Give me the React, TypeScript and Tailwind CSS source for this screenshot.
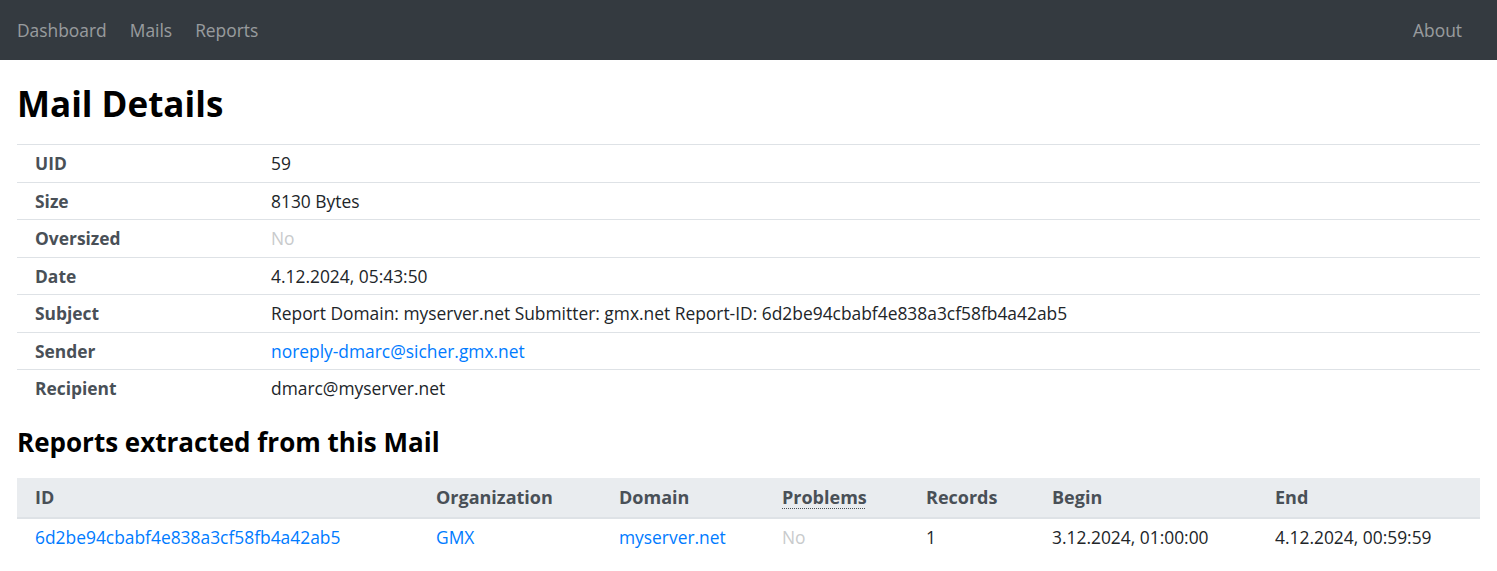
const font = { fontFamily: '"Open Sans", "Noto Sans", sans-serif' };

const details: { label: string; value: string; kind?: 'link' | 'muted' }[] = [
  { label: 'UID', value: '59' },
  { label: 'Size', value: '8130 Bytes' },
  { label: 'Oversized', value: 'No', kind: 'muted' },
  { label: 'Date', value: '4.12.2024, 05:43:50' },
  {
    label: 'Subject',
    value: 'Report Domain: myserver.net Submitter: gmx.net Report-ID: 6d2be94cbabf4e838a3cf58fb4a42ab5',
  },
  { label: 'Sender', value: 'noreply-dmarc@sicher.gmx.net', kind: 'link' },
  { label: 'Recipient', value: 'dmarc@myserver.net' },
];

function valueClass(kind?: 'link' | 'muted') {
  if (kind === 'link') return 'text-[#007bff]';
  if (kind === 'muted') return 'text-[#c8cacc]';
  return 'text-[#212529]';
}

export default function App() {
  return (
    <div className="min-h-[571px] bg-white text-[17.4px] text-[#212529]" style={font}>
      <nav className="flex h-[60px] items-center justify-between bg-[#343a40] px-[17px] text-[rgba(255,255,255,0.5)]">
        <div className="flex items-center gap-[23px]">
          <a>Dashboard</a>
          <a>Mails</a>
          <a>Reports</a>
        </div>
        <a className="mr-[18px]">About</a>
      </nav>

      <main className="px-[17px]">
        <h1 className="mt-[19px] mb-[15px] text-[35px] font-bold leading-[50px] text-black">Mail Details</h1>

        <table className="w-full border-collapse">
          <tbody>
            {details.map((row) => (
              <tr key={row.label} className="h-[37.5px] border-t border-[#dee2e6]">
                <th className="w-[236px] px-[18px] text-left font-bold text-[#495057]">{row.label}</th>
                <td className={`px-[18px] ${valueClass(row.kind)}`}>{row.value}</td>
              </tr>
            ))}
          </tbody>
        </table>

        <h2 className="mt-[17px] mb-[18px] text-[26px] font-bold leading-[36px] text-black">
          Reports extracted from this Mail
        </h2>

        <table className="w-full border-collapse">
          <thead>
            <tr className="h-[40px] border-b-2 border-[#dee2e6] bg-[#e9ecef] text-left text-[18px] text-[#495057]">
              <th className="w-[401px] px-[18px] font-bold">ID</th>
              <th className="w-[183px] px-[18px] font-bold">Organization</th>
              <th className="w-[163px] px-[18px] font-bold">Domain</th>
              <th className="w-[144px] px-[18px] font-bold">
                <abbr className="underline decoration-dotted underline-offset-[4px] decoration-1">Problems</abbr>
              </th>
              <th className="w-[126px] px-[18px] font-bold">Records</th>
              <th className="w-[223px] px-[18px] font-bold">Begin</th>
              <th className="px-[18px] font-bold">End</th>
            </tr>
          </thead>
          <tbody>
            <tr className="h-[38px]">
              <td className="px-[18px] text-[#007bff]">6d2be94cbabf4e838a3cf58fb4a42ab5</td>
              <td className="px-[18px] text-[#007bff]">GMX</td>
              <td className="px-[18px] text-[#007bff]">myserver.net</td>
              <td className="px-[18px] text-[#c8cacc]">No</td>
              <td className="px-[18px]">1</td>
              <td className="px-[18px]">3.12.2024, 01:00:00</td>
              <td className="px-[18px]">4.12.2024, 00:59:59</td>
            </tr>
          </tbody>
        </table>
      </main>
    </div>
  );
}
